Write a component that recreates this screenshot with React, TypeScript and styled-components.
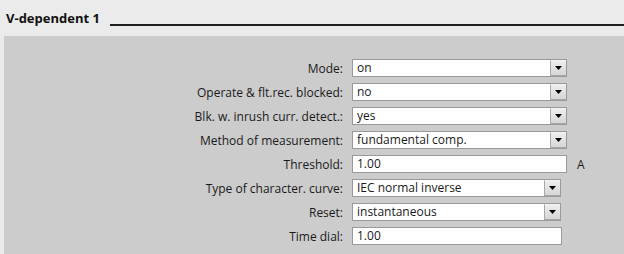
import styled, { createGlobalStyle } from 'styled-components';

const GlobalStyle = createGlobalStyle`
  html, body {
    margin: 0;
    padding: 0;
    background: #ebebeb;
  }
  body {
    width: 624px;
    height: 254px;
    overflow: hidden;
    font-family: 'Open Sans', 'DejaVu Sans', sans-serif;
  }
`;

type Field = {
  label: string;
  value: string;
  width: number;
  select?: boolean;
  unit?: string;
};

const fields: Field[] = [
  { label: 'Mode:', value: 'on', width: 215, select: true },
  { label: 'Operate & flt.rec. blocked:', value: 'no', width: 215, select: true },
  { label: 'Blk. w. inrush curr. detect.:', value: 'yes', width: 215, select: true },
  { label: 'Method of measurement:', value: 'fundamental comp.', width: 215, select: true },
  { label: 'Threshold:', value: '1.00', width: 215, unit: 'A' },
  { label: 'Type of character. curve:', value: 'IEC normal inverse', width: 209, select: true },
  { label: 'Reset:', value: 'instantaneous', width: 209, select: true },
  { label: 'Time dial:', value: '1.00', width: 210 },
];

const App = () => {
  return (
    <Page>
      <GlobalStyle />
      <Header>
        <Title>V-dependent 1</Title>
        <Rule />
      </Header>
      <Panel>
        {fields.map((item, index) => (
          <Row key={index}>
            <Label>{item.label}</Label>
            <Input $width={item.width}>
              <Value>{item.value}</Value>
              {item.select && (
                <DropButton>
                  <svg width="7" height="4" viewBox="0 0 7 4">
                    <path d="M0 0 H7 L3.5 4 Z" fill="#000" />
                  </svg>
                </DropButton>
              )}
            </Input>
            {item.unit && <Unit>{item.unit}</Unit>}
          </Row>
        ))}
      </Panel>
    </Page>
  );
};

const Page = styled.div`
  width: 624px;
  height: 254px;
  display: flex;
  flex-direction: column;
`;

const Header = styled.div`
  display: flex;
  align-items: flex-end;
  height: 36px;
  padding: 0 0 0 6px;
  box-sizing: border-box;
  gap: 10px;
`;

const Title = styled.div`
  font-family: 'Open Sans', 'DejaVu Sans', sans-serif;
  font-size: 13px;
  font-weight: 700;
  color: #111;
  line-height: 18px;
  margin-bottom: 9px;
`;

const Rule = styled.div`
  flex: 1;
  height: 0;
  border-top: 2px solid #1e1e1e;
  margin-bottom: 10px;
`;

const Panel = styled.div`
  flex: 1;
  margin-left: 4px;
  background: #cccccc;
  padding-top: 20px;
  display: flex;
  flex-direction: column;
`;

const Row = styled.div`
  display: flex;
  align-items: center;
  height: 24px;
`;

const Label = styled.div`
  width: 339px;
  text-align: right;
  font-size: 12px;
  color: #1a1a1a;
  white-space: nowrap;
  margin-right: 9px;
`;

const Input = styled.div<{ $width: number }>`
  width: ${(p) => p.$width}px;
  height: 18px;
  box-sizing: border-box;
  background: #fff;
  border: 1px solid #999999;
  display: flex;
  align-items: stretch;
`;

const Value = styled.div`
  flex: 1;
  padding-left: 4px;
  font-size: 12px;
  line-height: 16px;
  color: #1a1a1a;
  white-space: nowrap;
  overflow: hidden;
`;

const DropButton = styled.div`
  width: 16px;
  box-sizing: border-box;
  border: 1px solid #a8a8a8;
  border-right: none;
  border-top-color: #f4f4f4;
  background: linear-gradient(#eeeeee, #d6d6d6);
  display: flex;
  align-items: center;
  justify-content: center;
`;

const Unit = styled.div`
  margin-left: 10px;
  font-size: 12px;
  color: #1a1a1a;
`;

export default App;
